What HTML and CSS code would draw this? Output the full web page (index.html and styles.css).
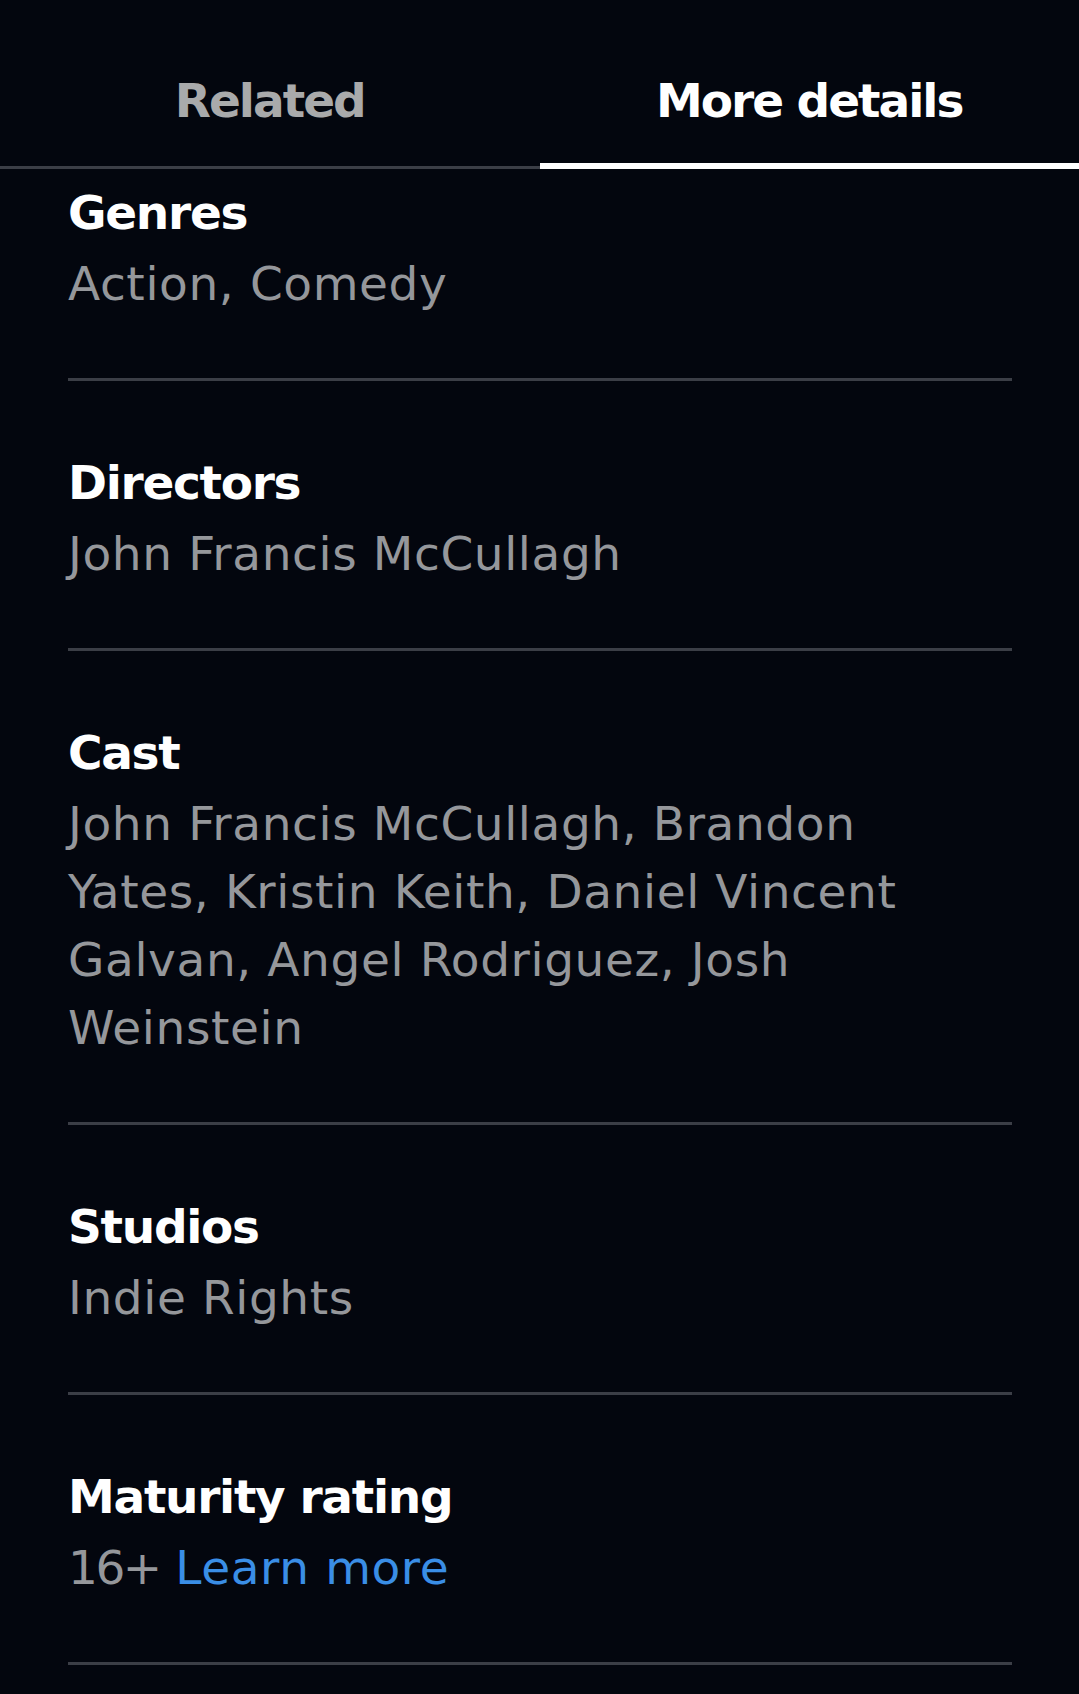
FILE: index.html
```html
<!DOCTYPE html>
<html lang="en">
<head>
  <meta charset="UTF-8" />
  <meta name="viewport" content="width=device-width, initial-scale=1" />
  <title>More details</title>
  <link rel="stylesheet" href="styles.css">
</head>
<body>
  <div class="tabs">
    <div class="tab">Related</div>
    <div class="tab active">More details</div>
  </div>

  <div class="details">
    <div class="detail">
      <div class="label">Genres</div>
      <div class="value">Action, Comedy</div>
    </div>
    <div class="detail">
      <div class="label">Directors</div>
      <div class="value">John Francis McCullagh</div>
    </div>
    <div class="detail">
      <div class="label">Cast</div>
      <div class="value">John Francis McCullagh, Brandon Yates, Kristin Keith, Daniel Vincent Galvan, Angel Rodriguez, Josh Weinstein</div>
    </div>
    <div class="detail">
      <div class="label">Studios</div>
      <div class="value">Indie Rights</div>
    </div>
    <div class="detail">
      <div class="label">Maturity rating</div>
      <div class="value"><span class="rating">16+</span> <a href="#" class="link">Learn more</a></div>
    </div>
  </div>
</body>
</html>
```

FILE: styles.css
```css
body {
  margin: 0;
  background-color: #03060e;
  font-family: 'DejaVu Sans', sans-serif;
  font-size: 47px;
  line-height: 68px;
  color: #fff;
}

.tabs {
  display: flex;
}
.tab {
  flex: 1;
  text-align: center;
  font-weight: bold;
  letter-spacing: -2px;
  color: #a9aaab;
  padding: 67px 0 31px;
  border-bottom: 3px solid #3b3e46;
}
.tab.active {
  color: #fff;
  padding-bottom: 28px;
  border-bottom: 6px solid #fff;
}

.details {
  padding: 0 67px 0 68px;
}
.detail {
  padding: 68px 0 60px;
  border-bottom: 3px solid #3b3e46;
}
.detail:first-child {
  padding-top: 10px;
}
.label {
  font-weight: bold;
  letter-spacing: -1.3px;
  color: #fff;
  margin-bottom: 3px;
}
.value {
  color: #95979b;
  letter-spacing: 0.6px;
  padding-right: 24px;
}
.rating {
  letter-spacing: -2.5px;
}
.link {
  color: #3a8ee6;
  text-decoration: none;
}
```
